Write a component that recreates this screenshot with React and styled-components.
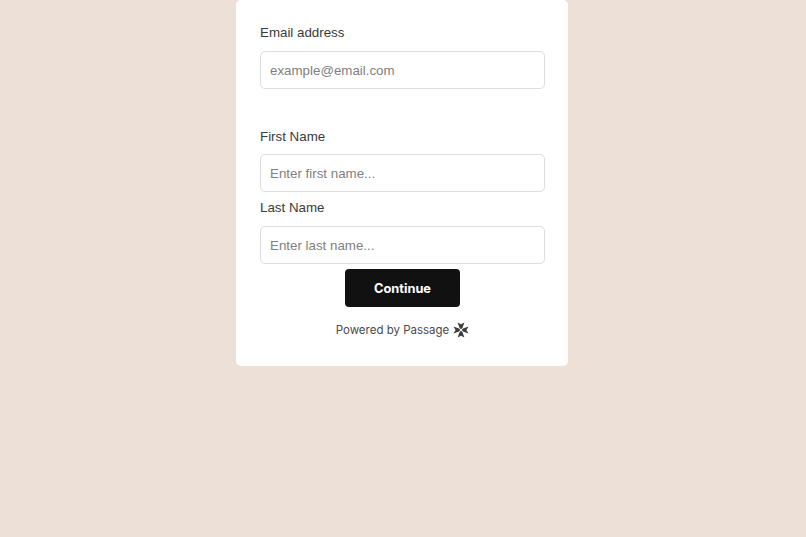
import React from 'react';
import styled, { createGlobalStyle } from 'styled-components';

const GlobalStyle = createGlobalStyle`
  html, body {
    margin: 0;
    padding: 0;
    height: 100%;
    background: #ede0d7;
  }
  body {
    font-family: "Liberation Sans", Arial, sans-serif;
  }
`;

const Page = styled.div`
  display: flex;
  justify-content: center;
  min-height: 537px;
  padding-right: 2px;
  box-sizing: border-box;
  background: #ede0d7;
`;

const Card = styled.form`
  box-sizing: border-box;
  width: 332px;
  height: 366px;
  padding: 25px 23px 0 24px;
  background: #fff;
  border-radius: 5px;
  display: flex;
  flex-direction: column;
`;

const Field = styled.div`
  display: flex;
  flex-direction: column;
  margin-top: ${(p) => p.$top || 0}px;
`;

const Label = styled.label`
  font-size: 13.33px;
  line-height: 15px;
  color: #3a3a3a;
  margin-bottom: ${(p) => p.$gap || 11}px;
`;

const Input = styled.input`
  box-sizing: border-box;
  width: 285px;
  height: 38px;
  padding: 0 9px;
  font-family: inherit;
  font-size: 13.33px;
  color: #333;
  background: #fff;
  border: 1px solid #dedede;
  border-radius: 5px;
  outline: none;

  &::placeholder {
    color: #808080;
    opacity: 1;
  }
`;

const Button = styled.button`
  align-self: center;
  box-sizing: border-box;
  width: 115px;
  height: 38px;
  margin-top: 5px;
  padding: 0;
  background: #111;
  color: #fff;
  border: 0;
  border-radius: 4px;
  font-family: Inter, "Liberation Sans", sans-serif;
  font-size: 12.8px;
  font-weight: 700;
`;

const Powered = styled.div`
  display: flex;
  align-items: center;
  justify-content: center;
  gap: 4px;
  margin-top: 14px;
  font-family: Inter, "Liberation Sans", sans-serif;
  font-size: 11.5px;
  line-height: 18px;
  color: #4a4a4a;
`;

const PassageMark = () => (
  <svg width="16" height="16" viewBox="0 0 16 16" fill="#3d3d3d">
    <path d="M4.6 0.6 8 2.2 11.4 0.6 9.4 6 8 7.2 6.6 6z" />
    <path d="M4.6 15.4 8 13.8 11.4 15.4 9.4 10 8 8.8 6.6 10z" />
    <path d="M0.4 4.6 2.6 8 0.4 11.4 6 9.4 7.2 8 6 6.6z" />
    <path d="M15.6 4.6 13.4 8 15.6 11.4 10 9.4 8.8 8 10 6.6z" />
  </svg>
);

const App = () => {
  return (
    <Page>
      <GlobalStyle />
      <Card onSubmit={(e) => e.preventDefault()}>
        <Field>
          <Label>Email address</Label>
          <Input type="email" placeholder="example@email.com" />
        </Field>
        <Field $top={40}>
          <Label $gap={10}>First Name</Label>
          <Input type="text" placeholder="Enter first name..." />
        </Field>
        <Field $top={8}>
          <Label>Last Name</Label>
          <Input type="text" placeholder="Enter last name..." />
        </Field>
        <Button type="submit">Continue</Button>
        <Powered>
          Powered by Passage
          <PassageMark />
        </Powered>
      </Card>
    </Page>
  );
};

export default App;
